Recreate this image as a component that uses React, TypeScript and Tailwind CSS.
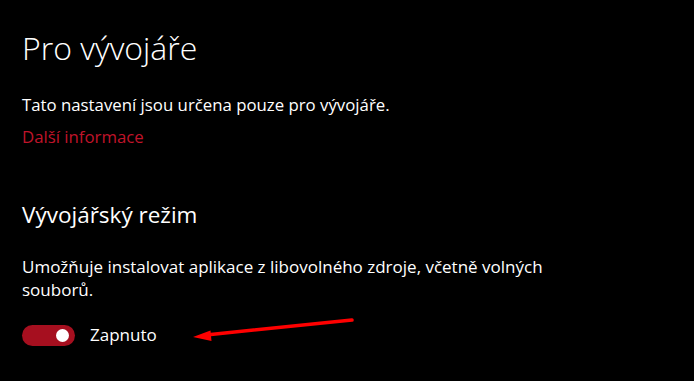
import React from "react";

export default function App() {
  return (
    <div
      className="relative w-[694px] h-[381px] bg-black text-white overflow-hidden"
      style={{ fontFamily: '"Open Sans", "Noto Sans", sans-serif' }}
    >
      <div className="flex flex-col pl-[22px] pt-[28px]">
        <h1 className="text-[32px] leading-[40px] font-light text-white">Pro vývojáře</h1>
        <p className="mt-[25px] text-[16.8px] leading-[24px]">Tato nastavení jsou určena pouze pro vývojáře.</p>
        <a className="mt-[8px] text-[16.8px] leading-[24px] text-[#c0142a]">Další informace</a>
        <h2 className="mt-[52px] text-[22.5px] leading-[28px]">Vývojářský režim</h2>
        <p className="mt-[26px] text-[17px] leading-[23px]">
          Umožňuje instalovat aplikace z libovolného zdroje, včetně volných
          <br />
          souborů.
        </p>
        <div className="mt-[22px] flex items-center gap-[15px]">
          <div className="w-[53px] h-[21px] rounded-full bg-[#a60f1f] flex items-center justify-end pr-[6px]">
            <div className="w-[13px] h-[13px] rounded-full bg-white" />
          </div>
          <span className="text-[17px] leading-[24px]">Zapnuto</span>
        </div>
      </div>
      <svg className="absolute left-0 top-0" width="694" height="381" viewBox="0 0 694 381">
        <line x1="352" y1="320" x2="206" y2="335" stroke="#f00" strokeWidth="3.5" strokeLinecap="round" />
        <polygon points="193,337 210.5,330.5 211.5,341" fill="#f00" />
      </svg>
    </div>
  );
}
